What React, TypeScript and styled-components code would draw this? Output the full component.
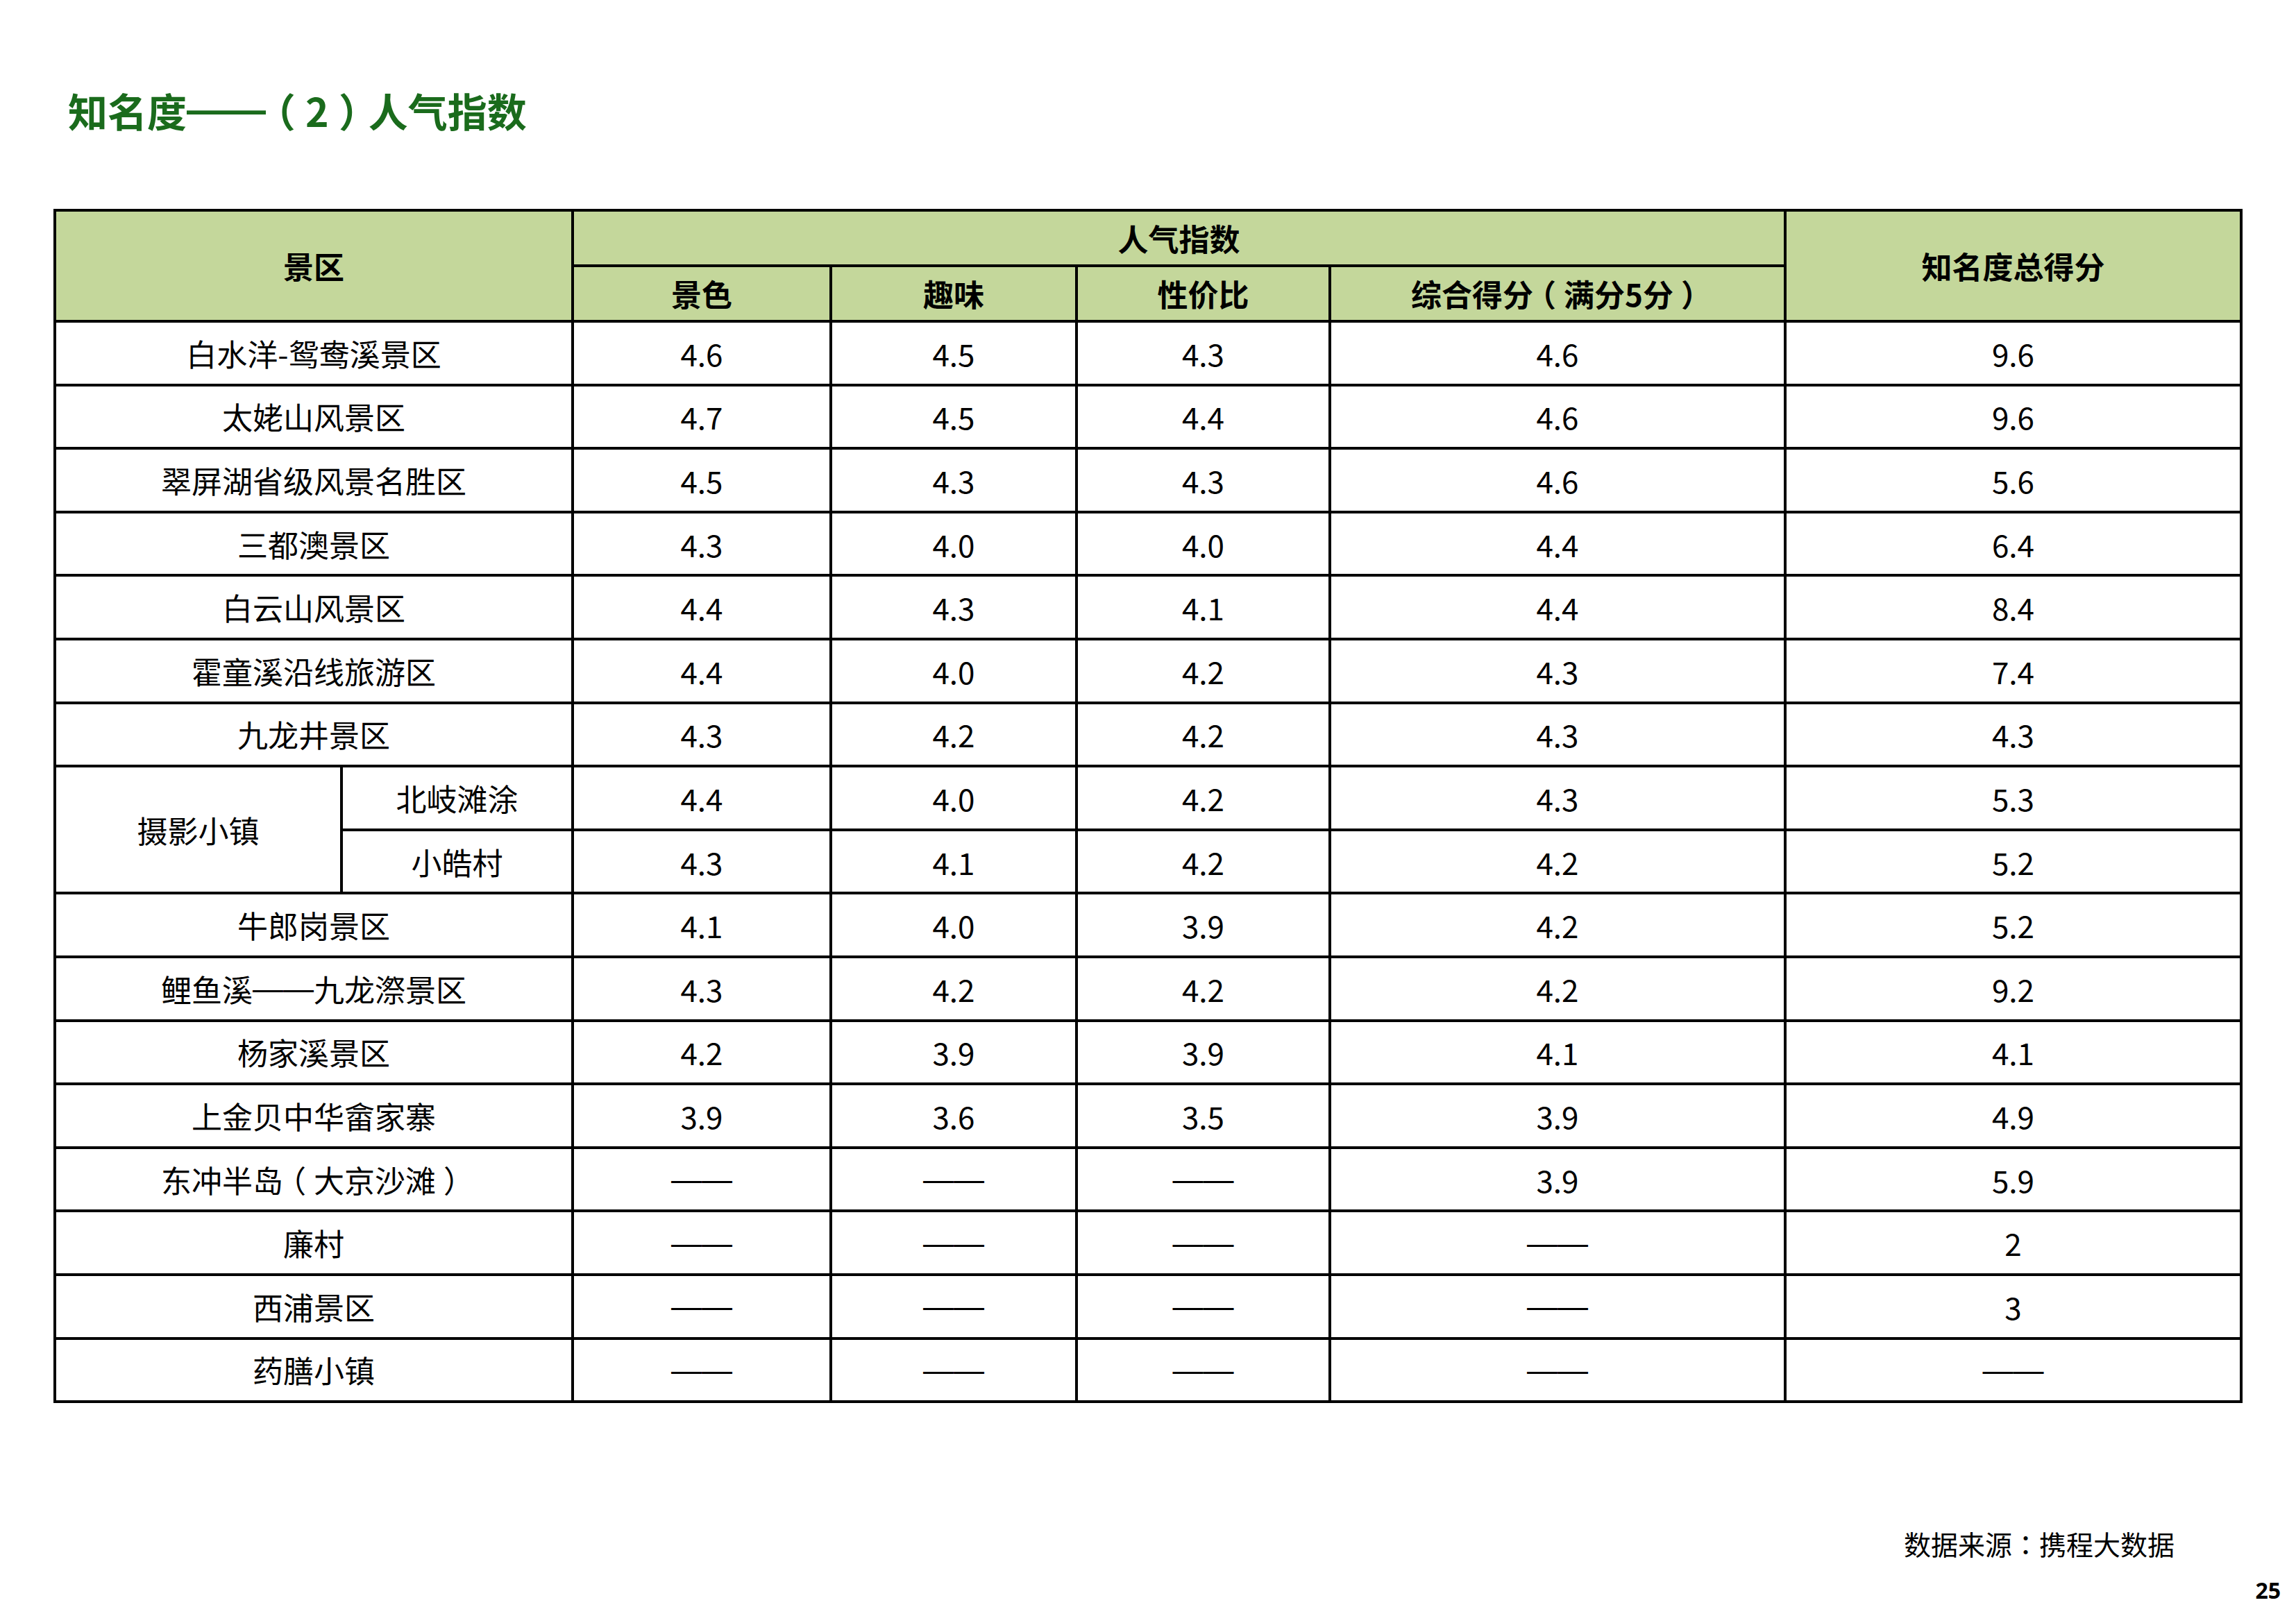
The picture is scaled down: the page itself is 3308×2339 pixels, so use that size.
import React from 'react';
import styled, { createGlobalStyle } from 'styled-components';

const GlobalStyle = createGlobalStyle`
  html, body {
    margin: 0;
    padding: 0;
    background: #fff;
  }
  body {
    font-family: 'Noto Sans CJK SC', 'Noto Sans', sans-serif;
    color: #000;
  }
`;

type Row = [string, string, string, string, string, string];

const topRows: Row[] = [
  ['白水洋-鸳鸯溪景区', '4.6', '4.5', '4.3', '4.6', '9.6'],
  ['太姥山风景区', '4.7', '4.5', '4.4', '4.6', '9.6'],
  ['翠屏湖省级风景名胜区', '4.5', '4.3', '4.3', '4.6', '5.6'],
  ['三都澳景区', '4.3', '4.0', '4.0', '4.4', '6.4'],
  ['白云山风景区', '4.4', '4.3', '4.1', '4.4', '8.4'],
  ['霍童溪沿线旅游区', '4.4', '4.0', '4.2', '4.3', '7.4'],
  ['九龙井景区', '4.3', '4.2', '4.2', '4.3', '4.3'],
];

const townRows: Row[] = [
  ['北岐滩涂', '4.4', '4.0', '4.2', '4.3', '5.3'],
  ['小皓村', '4.3', '4.1', '4.2', '4.2', '5.2'],
];

const bottomRows: Row[] = [
  ['牛郎岗景区', '4.1', '4.0', '3.9', '4.2', '5.2'],
  ['鲤鱼溪——九龙漈景区', '4.3', '4.2', '4.2', '4.2', '9.2'],
  ['杨家溪景区', '4.2', '3.9', '3.9', '4.1', '4.1'],
  ['上金贝中华畲家寨', '3.9', '3.6', '3.5', '3.9', '4.9'],
  ['东冲半岛（大京沙滩）', '——', '——', '——', '3.9', '5.9'],
  ['廉村', '——', '——', '——', '——', '2'],
  ['西浦景区', '——', '——', '——', '——', '3'],
  ['药膳小镇', '——', '——', '——', '——', '——'],
];

const colWidths = [413, 333, 372, 354, 365, 656, 657];

// in the original the full-width brackets sit centred in their box and the dashes run full width
function Txt({ s }: { s: string }) {
  const parts = s.split(/(—+|[（）：])/).filter(Boolean);
  return (
    <>
      {parts.map((p, i) => {
        if (p[0] === '—') return <Dash key={i}>{p}</Dash>;
        if (p === '（' || p === '）') return <Bracket key={i}>{p}</Bracket>;
        if (p === '：') return <Colon key={i}>{p}</Colon>;
        return <React.Fragment key={i}>{p}</React.Fragment>;
      })}
    </>
  );
}

function ScoreCells({ row }: { row: Row }) {
  return (
    <>
      {row.slice(1).map((v, i) => (
        <Cell key={i}>
          <Txt s={v} />
        </Cell>
      ))}
    </>
  );
}

export default function App() {
  return (
    <Page>
      <GlobalStyle />
      <Title>
        <Txt s="知名度——（2）人气指数" />
      </Title>

      <ScoreTable>
        <colgroup>
          {colWidths.map((w, i) => (
            <col key={i} style={{ width: w }} />
          ))}
        </colgroup>
        <thead>
          <HeadRow>
            <HeadCell colSpan={2} rowSpan={2}>景区</HeadCell>
            <HeadCell colSpan={4}>人气指数</HeadCell>
            <HeadCell rowSpan={2}>知名度总得分</HeadCell>
          </HeadRow>
          <HeadRow>
            <HeadCell $thin>景色</HeadCell>
            <HeadCell $thin>趣味</HeadCell>
            <HeadCell $thin>性价比</HeadCell>
            <HeadCell $thin>
              <Txt s="综合得分（满分5分）" />
            </HeadCell>
          </HeadRow>
        </thead>
        <tbody>
          {topRows.map((r) => (
            <BodyRow key={r[0]}>
              <Cell colSpan={2}>
                <Txt s={r[0]} />
              </Cell>
              <ScoreCells row={r} />
            </BodyRow>
          ))}
          {townRows.map((r, i) => (
            <BodyRow key={r[0]}>
              {i === 0 && <Cell rowSpan={2}>摄影小镇</Cell>}
              <Cell>{r[0]}</Cell>
              <ScoreCells row={r} />
            </BodyRow>
          ))}
          {bottomRows.map((r) => (
            <BodyRow key={r[0]}>
              <Cell colSpan={2}>
                <Txt s={r[0]} />
              </Cell>
              <ScoreCells row={r} />
            </BodyRow>
          ))}
        </tbody>
      </ScoreTable>

      <Source>
        <Txt s="数据来源：携程大数据" />
      </Source>
      <PageNo>25</PageNo>
    </Page>
  );
}

const Page = styled.div`
  width: 3308px;
  height: 2339px;
  box-sizing: border-box;
  padding: 0 77px;
  display: flex;
  flex-direction: column;
  overflow: hidden;
`;

const Title = styled.h1`
  margin: 130px 0 0 21px;
  height: 57px;
  font-size: 57px;
  line-height: 57px;
  font-weight: 700;
  color: #1a6b1c;
  white-space: nowrap;
`;

const Dash = styled.span`
  font-family: 'Liberation Sans', 'Noto Sans', sans-serif;
  line-height: 0;
  position: relative;
  top: -0.08em;
`;

const Bracket = styled.span`
  font-feature-settings: 'halt';
  padding: 0 0.25em;
`;

const Colon = styled.span`
  font-family: 'Noto Sans CJK TC', 'Noto Sans CJK SC', sans-serif;
`;

const ScoreTable = styled.table`
  margin-top: 114px;
  width: 3154px;
  border-collapse: collapse;
  table-layout: fixed;
  border: 4px solid #000;
  font-size: 44px;
  line-height: 1;
`;

const HeadRow = styled.tr`
  height: 80px;
`;

const BodyRow = styled.tr`
  height: 91.6px;
`;

const HeadCell = styled.th<{ $thin?: boolean }>`
  background: #c4d79b;
  border: 4px solid #000;
  border-top-width: ${({ $thin }) => ($thin ? '3px' : '4px')};
  font-weight: 700;
  font-size: 44px;
  text-align: center;
  vertical-align: middle;
  padding: 0;
  white-space: nowrap;
`;

const Cell = styled.td`
  border: 4px solid #000;
  text-align: center;
  vertical-align: middle;
  padding: 0;
  font-weight: 400;
  white-space: nowrap;
`;

const Source = styled.div`
  margin-top: 182px;
  align-self: flex-end;
  margin-right: 98px;
  font-size: 39px;
  line-height: 40px;
  white-space: nowrap;
`;

const PageNo = styled.div`
  margin-top: 32px;
  align-self: flex-end;
  margin-right: -55px;
  font-family: 'Open Sans', 'Noto Sans', sans-serif;
  font-weight: 700;
  font-size: 32px;
  line-height: 32px;
`;
